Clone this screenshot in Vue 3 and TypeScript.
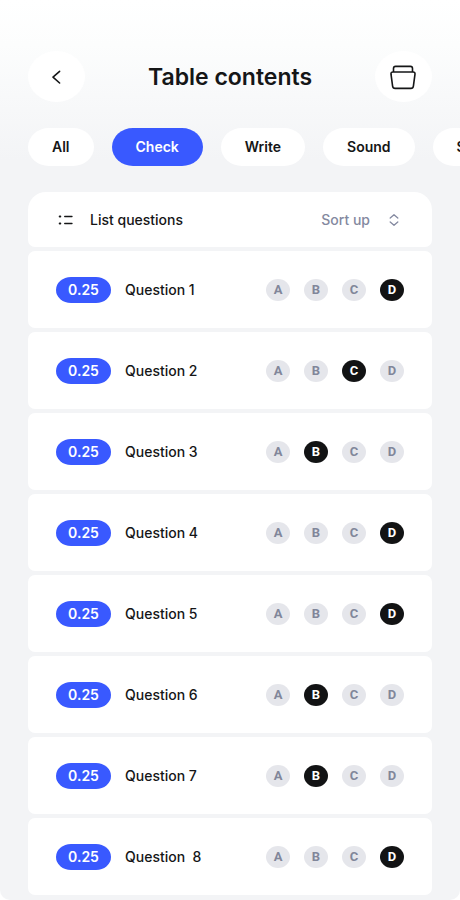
<script setup lang="ts">
import { ref } from 'vue'

type Choice = 'A' | 'B' | 'C' | 'D'

interface Question {
  id: number
  title: string
  points: string
  answer: Choice
}

const tabs: string[] = ['All', 'Check', 'Write', 'Sound', 'Speak']
const activeTab = ref<string>('Check')

const choices: Choice[] = ['A', 'B', 'C', 'D']

const questions = ref<Question[]>([
  { id: 1, title: 'Question 1', points: '0.25', answer: 'D' },
  { id: 2, title: 'Question 2', points: '0.25', answer: 'C' },
  { id: 3, title: 'Question 3', points: '0.25', answer: 'B' },
  { id: 4, title: 'Question 4', points: '0.25', answer: 'D' },
  { id: 5, title: 'Question 5', points: '0.25', answer: 'D' },
  { id: 6, title: 'Question 6', points: '0.25', answer: 'B' },
  { id: 7, title: 'Question 7', points: '0.25', answer: 'B' },
  { id: 8, title: 'Question  8', points: '0.25', answer: 'D' },
])
</script>

<template>
  <main class="page">
    <header class="top">
      <button class="round" type="button" aria-label="Back">
        <svg width="26" height="26" viewBox="0 0 26 26" fill="none" stroke="currentColor" stroke-width="1.6" stroke-linecap="round" stroke-linejoin="round">
          <path d="M15.600 7.400 9 13.200l6.600 5.800" />
        </svg>
      </button>
      <h1 class="title">Table contents</h1>
      <button class="round" type="button" aria-label="Collection">
        <svg width="26" height="26" viewBox="0 0 26 26" fill="none" stroke="currentColor" stroke-width="1.6" stroke-linejoin="round">
          <path d="M3.500 8V4.600Q3.500 2.400 5.600 2.400H20.400Q22.500 2.400 22.500 4.600V8" />
          <path d="M3 8H23Q25.200 8 25 10.200L23.400 22.200Q23.100 24.400 20.900 24.400H5.100Q2.900 24.400 2.600 22.200L1 10.200Q.8 8 3 8Z" />
        </svg>
      </button>
    </header>

    <nav class="tabs" aria-label="Sections">
      <button
        v-for="tab in tabs"
        :key="tab"
        type="button"
        class="tab"
        :class="{ active: tab === activeTab }"
        :aria-pressed="tab === activeTab"
        @click="activeTab = tab"
      >{{ tab }}</button>
    </nav>

    <section class="list">
      <div class="card head">
        <svg class="list-icon" width="16" height="12" viewBox="0 0 16 12" fill="none" stroke="currentColor" stroke-linecap="round">
          <path d="M1.800 2.500h.4M1.800 9.500h.4" stroke-width="2.200" />
          <path d="M6.700 2.500h7.300M6.700 9.500h7.300" stroke-width="1.300" />
        </svg>
        <h2 class="head-title">List questions</h2>
        <button class="sort" type="button">
          Sort up
          <svg width="10" height="14" viewBox="0 0 10 14" fill="none" stroke="currentColor" stroke-width="1.300" stroke-linecap="round" stroke-linejoin="round">
            <path d="M1.200 5 5 1.700 8.800 5M1.200 9 5 12.300 8.800 9" />
          </svg>
        </button>
      </div>

      <div v-for="q in questions" :key="q.id" class="card row" role="radiogroup" :aria-label="q.title">
        <span class="points">{{ q.points }}</span>
        <span class="name">{{ q.title }}</span>
        <div class="choices">
          <label v-for="c in choices" :key="c" class="choice">
            <input v-model="q.answer" type="radio" :name="`q${q.id}`" :value="c" />
            <span>{{ c }}</span>
          </label>
        </div>
      </div>
    </section>
  </main>
</template>

<style>
body {
  margin: 0;
  background: #ffffff;
}
</style>

<style scoped>
.page {
  box-sizing: border-box;
  padding: 51px 0 5px;
  border-radius: 0 0 10px 10px;
  background: linear-gradient(#ffffff 0, #fcfdfd 45px, #f3f4f6 160px);
  color: #151617;
  font-family: Inter, "Liberation Sans", sans-serif;
  font-size: 14px;
  line-height: 20px;
}

button {
  border: 0;
  margin: 0;
  padding: 0;
  background: none;
  color: inherit;
  font: inherit;
  cursor: pointer;
}

svg {
  display: block;
}

.top {
  display: flex;
  align-items: center;
  justify-content: space-between;
  padding: 0 28px;
}

.round {
  display: grid;
  place-items: center;
  width: 57px;
  height: 51px;
  border-radius: 50%;
  background: #ffffff;
}

.title {
  margin: 0;
  font-size: 23px;
  line-height: 28px;
  font-weight: 600;
}

.tabs {
  display: flex;
  gap: 18px;
  margin-top: 26px;
  padding: 0 28px;
  overflow-x: auto;
  scrollbar-width: none;
}

.tab {
  flex: none;
  height: 38px;
  padding: 0 24px;
  border-radius: 21px / 19px;
  background: #ffffff;
  font-weight: 600;
}

.tab.active {
  background: #3959ff;
  color: #ffffff;
}

.list {
  display: grid;
  gap: 4px;
  margin: 26px 28px 0;
}

.card {
  display: flex;
  align-items: center;
  box-sizing: border-box;
  padding: 0 28px;
  border-radius: 7px;
  background: #ffffff;
}

.head {
  height: 55px;
  padding: 0 33px 0 30px;
  border-radius: 18px 18px 7px 7px;
}

.head-title {
  margin: 0 0 0 16px;
  font-size: 14px;
  line-height: 20px;
  font-weight: 500;
}

.sort {
  display: flex;
  align-items: center;
  gap: 19px;
  margin-left: auto;
  color: #8489a0;
  font-weight: 500;
}

.row {
  height: 77px;
}

.points {
  box-sizing: border-box;
  width: 55px;
  border-radius: 15px / 13px;
  background: #3959ff;
  color: #ffffff;
  font-weight: 600;
  line-height: 26px;
  text-align: center;
}

.name {
  margin-left: 14px;
  font-weight: 500;
  white-space: pre;
}

.choices {
  display: flex;
  gap: 14px;
  margin-left: auto;
}

.choice {
  display: grid;
  place-items: center;
  width: 24px;
  height: 22px;
  color: #81869a;
  font-family: Roboto, "Liberation Sans", sans-serif;
  font-size: 13px;
  font-weight: 700;
  line-height: 22px;
  cursor: pointer;
}

.choice input,
.choice span {
  grid-area: 1 / 1;
}

.choice input {
  appearance: none;
  width: 24px;
  height: 22px;
  margin: 0;
  border-radius: 50%;
  background: #e5e6eb;
  cursor: pointer;
}

.choice input:checked {
  background: #121314;
}

.choice span {
  z-index: 1;
}

.choice input:checked + span {
  color: #ffffff;
}
</style>
